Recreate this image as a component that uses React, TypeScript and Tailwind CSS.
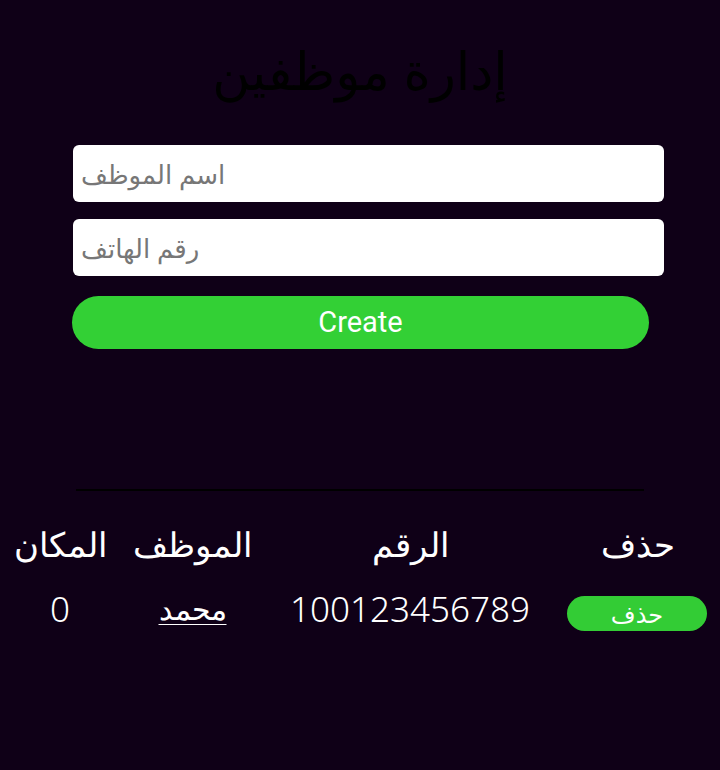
import { useState } from "react";

type Employee = {
  place: number;
  name: string;
  phone: string;
};

function App() {
  const [employees] = useState<Employee[]>([
    { place: 0, name: "محمد", phone: "100123456789" },
  ]);

  return (
    <div className="min-h-screen w-full bg-[#0f0017] font-['Noto_Sans','DejaVu_Sans',sans-serif]">
      <h1 className="pt-[30px] text-center text-[52px] font-medium leading-[80px] text-black">
        إدارة موظفين
      </h1>

      <div className="mt-[35px] flex flex-col pl-[73px] pr-[56px]">
        <input
          className="h-[57px] w-full rounded-md bg-white px-2 text-[26px] font-medium text-gray-800 placeholder:text-[#777]"
          placeholder="اسم الموظف"
          dir="ltr"
        />
        <input
          className="mt-[17px] h-[57px] w-full rounded-md bg-white px-2 text-[26px] font-medium text-gray-800 placeholder:text-[#777]"
          placeholder="رقم الهاتف"
          dir="ltr"
        />
        <button className="mt-[20px] mr-[15px] -ml-px h-[53px] rounded-full bg-[#33d035] font-['Roboto',sans-serif] text-[29px] text-white">
          Create
        </button>
      </div>

      <div className="mx-[76px] mt-[140px] h-[2px] bg-black" />

      <div className="mt-[28px] grid grid-cols-[120px_145px_290px_165px] text-white">
        <div className="text-center text-[34px] font-light leading-[50px]">المكان</div>
        <div className="text-center text-[34px] font-light leading-[50px]">الموظف</div>
        <div className="text-center text-[34px] font-light leading-[50px]">الرقم</div>
        <div className="text-center text-[34px] font-light leading-[50px]">حذف</div>

        {employees.map((e) => (
          <>
            <div className="mt-[15px] text-center text-[35px] font-light leading-[50px]">{e.place}</div>
            <div className="mt-[15px] text-center text-[30px] font-light leading-[50px] underline decoration-1 underline-offset-4">
              {e.name}
            </div>
            <div className="mt-[15px] text-center text-[35px] font-light leading-[50px]">{e.phone}</div>
            <div className="mt-[27px] flex items-start justify-end pr-[13px]">
              <button className="h-[35px] w-[140px] rounded-full bg-[#33cc35] text-[24px] leading-[35px] text-white">
                حذف
              </button>
            </div>
          </>
        ))}
      </div>
    </div>
  );
}

export default App;
